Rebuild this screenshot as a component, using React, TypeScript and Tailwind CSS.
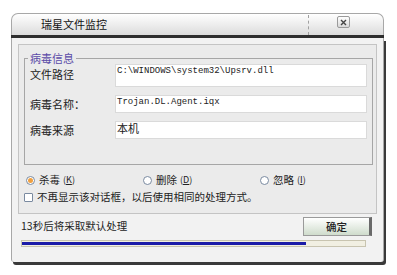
import React from 'react';

const cjk = { fontFamily: '"Noto Sans CJK SC", "Liberation Sans", sans-serif' };
const mono = { fontFamily: '"Liberation Mono", "Noto Sans CJK SC", monospace' };

const Radio: React.FC<{ checked?: boolean; label: string; hot: string }> = ({ checked, label, hot }) => (
    <div className="flex items-center">
        <span className="w-[9px] h-[9px] rounded-full border border-[#7a8aa0] bg-white flex items-center justify-center">
            {checked && <span className="w-[5px] h-[5px] rounded-full bg-[#f0a040]" />}
        </span>
        <span className="ml-[4px] text-[10.5px] text-[#222]">{label}</span>
        <span className="ml-[3px] text-[9px] text-[#222]">
            (<span className="underline">{hot}</span>)
        </span>
    </div>
);

const App: React.FC = () => {
    return (
        <div className="w-[397px] h-[275px] bg-white overflow-hidden" style={cjk}>
            <div className="ml-[11px] mt-[13px] w-[373px] flex flex-col">
                {/* title bar */}
                <div className="h-[22px] rounded-t-[7px] border border-b-0 border-[#a8a8a8] bg-gradient-to-b from-white to-[#dcdcdc] flex items-center relative">
                    <span className="ml-[29px] text-[11px] text-[#111]">瑞星文件监控</span>
                    <div className="absolute left-[296px] top-[1px] bottom-0 border-l border-dashed border-[#a0a0a0]" />
                    <div className="absolute left-[325px] top-[2px] w-[13px] h-[12px] border border-[#9a9a9a] rounded-[2px] bg-gradient-to-b from-white to-[#d8d8d8] flex items-center justify-center">
                        <svg width="7" height="7" viewBox="0 0 7 7">
                            <path d="M1 1 L6 6 M6 1 L1 6" stroke="#444" strokeWidth="1.4" />
                        </svg>
                    </div>
                </div>
                <div className="h-[3px] bg-[#2e2e2e]" />
                {/* body */}
                <div className="border-x border-[#a8a8a8] bg-[#f2f2f2] px-[6px] pt-[6px] pb-[4px] rounded-b-[3px] shadow-[2px_3px_0_#3a3a3a]">
                    <div className="h-[170px] border border-[#c4c4c4] bg-[#ebebeb] pl-[5px] pt-[13px]">
                        {/* group box */}
                        <div className="relative w-[349px] h-[107px] border border-[#a6a6a6] pt-[5px] pl-[5px]">
                            <span className="absolute -top-[8px] left-[3px] px-[2px] bg-[#ebebeb] text-[11px] leading-[14px] text-[#5a4aa8]">病毒信息</span>
                            <div className="flex items-start">
                                <span className="w-[85px] mt-[2px] text-[11px] text-[#222]">文件路径</span>
                                <div className="w-[252px] h-[23px] bg-white border border-[#dadada] pl-[1px] text-[9px] leading-[11px] pt-[1px] text-[#222]" style={mono}>
                                    C:\WINDOWS\system32\Upsrv.dll
                                </div>
                            </div>
                            <div className="flex items-center mt-[8px]">
                                <span className="w-[85px] text-[11px] text-[#222]">病毒名称：</span>
                                <div className="w-[252px] h-[18px] bg-white border border-[#dadada] pl-[1px] text-[9px] leading-[12px] text-[#222]" style={mono}>
                                    Trojan.DL.Agent.iqx
                                </div>
                            </div>
                            <div className="flex items-center mt-[8px]">
                                <span className="w-[85px] text-[11px] text-[#222]">病毒来源</span>
                                <div className="w-[252px] h-[18px] bg-white border border-[#dadada] pl-[1px] text-[11px] leading-[12px] text-[#222]">
                                    本机
                                </div>
                            </div>
                        </div>
                        {/* options */}
                        <div className="flex items-center mt-[8px] pl-[2px] h-[14px]">
                            <div className="w-[117px]"><Radio checked label="杀毒" hot="K" /></div>
                            <div className="w-[117px]"><Radio label="删除" hot="D" /></div>
                            <Radio label="忽略" hot="I" />
                        </div>
                        <div className="flex items-center mt-[3px] h-[14px]">
                            <span className="w-[9px] h-[9px] border border-[#7a8aa0] bg-white rounded-[1px]" />
                            <span className="ml-[4px] text-[10.5px] text-[#222]">不再显示该对话框，以后使用相同的处理方式。</span>
                        </div>
                    </div>
                    {/* status */}
                    <div className="flex items-center justify-between pl-[3px] pr-[5px] mt-[3px]">
                        <span className="text-[10.5px] text-[#222] -mt-[2px]">13秒后将采取默认处理</span>
                        <button className="w-[69px] h-[19px] border border-[#9a9a9a] border-r-[3px] border-r-[#6a6a6a] bg-gradient-to-b from-white to-[#cfdccc] text-[10.5px] text-[#222] font-medium">
                            确定
                        </button>
                    </div>
                    <div className="ml-[3px] mt-[4px] w-[345px] h-[7px] border border-[#c8c4b0] bg-[#f1efe2] flex items-center">
                        <div className="w-[284px] h-[3px] bg-[#1c1ca8]" />
                    </div>
                    <div className="h-[11px]" />
                </div>
            </div>
        </div>
    );
};

export default App;
